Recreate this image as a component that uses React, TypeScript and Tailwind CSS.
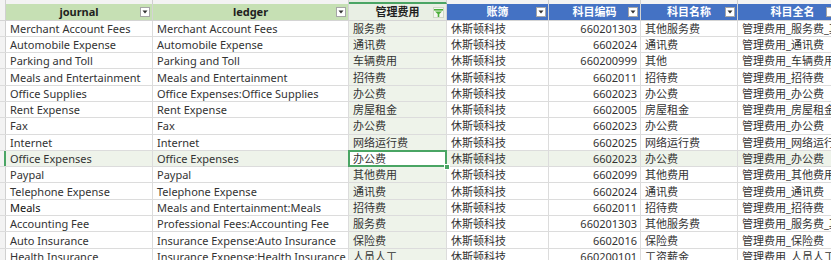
import React from "react";

const rows = [
  ["Merchant Account Fees", "Merchant Account Fees", "服务费", "休斯顿科技", "660201303", "其他服务费", "管理费用_服务费_其他服务费"],
  ["Automobile Expense", "Automobile Expense", "通讯费", "休斯顿科技", "6602024", "通讯费", "管理费用_通讯费"],
  ["Parking and Toll", "Parking and Toll", "车辆费用", "休斯顿科技", "660200999", "其他", "管理费用_车辆费用_其他"],
  ["Meals and Entertainment", "Meals and Entertainment", "招待费", "休斯顿科技", "6602011", "招待费", "管理费用_招待费"],
  ["Office Supplies", "Office Expenses:Office Supplies", "办公费", "休斯顿科技", "6602023", "办公费", "管理费用_办公费"],
  ["Rent Expense", "Rent Expense", "房屋租金", "休斯顿科技", "6602005", "房屋租金", "管理费用_房屋租金"],
  ["Fax", "Fax", "办公费", "休斯顿科技", "6602023", "办公费", "管理费用_办公费"],
  ["Internet", "Internet", "网络运行费", "休斯顿科技", "6602025", "网络运行费", "管理费用_网络运行费"],
  ["Office Expenses", "Office Expenses", "办公费", "休斯顿科技", "6602023", "办公费", "管理费用_办公费"],
  ["Paypal", "Paypal", "其他费用", "休斯顿科技", "6602099", "其他费用", "管理费用_其他费用"],
  ["Telephone Expense", "Telephone Expense", "通讯费", "休斯顿科技", "6602024", "通讯费", "管理费用_通讯费"],
  ["Meals", "Meals and Entertainment:Meals", "招待费", "休斯顿科技", "6602011", "招待费", "管理费用_招待费"],
  ["Accounting Fee", "Professional Fees:Accounting Fee", "服务费", "休斯顿科技", "660201303", "其他服务费", "管理费用_服务费_其他服务费"],
  ["Auto Insurance", "Insurance Expense:Auto Insurance", "保险费", "休斯顿科技", "6602016", "保险费", "管理费用_保险费"],
  ["Health Insurance", "Insurance Expense:Health Insurance", "人员人工", "休斯顿科技", "660200101", "工资薪金", "管理费用_人员人工_工资薪金"],
];

// column widths in px, after the 6px row-number strip
const widths = ["w-[147px]", "w-[196px]", "w-[98px]", "w-[102px]", "w-[92px]", "w-[97px]", "w-[160px]"];
const ACTIVE_ROW = 8;

function Dropdown() {
  return (
    <span className="absolute right-[2px] top-[3px] w-[10px] h-[10px] bg-white border border-[#a6a6a6] flex items-center justify-center">
      <svg width="6" height="4" viewBox="0 0 6 4">
        <path d="M0.5 0.5 L5.5 0.5 L3 3.5 Z" fill="#333" />
      </svg>
    </span>
  );
}

function Funnel() {
  return (
    <span className="absolute right-[2px] top-[3px] w-[11px] h-[11px] bg-[#f4f7f1] border border-[#cfd8c8] flex items-center justify-center">
      <svg width="9" height="8" viewBox="0 0 9 8">
        <path d="M0 0 H9 V1.6 H0 Z" fill="#4caf3a" />
        <path d="M1 2.4 H8 L5.3 5 V8 H3.7 V5 Z" fill="#4caf3a" />
      </svg>
    </span>
  );
}

export default function App() {
  const headers = [
    { t: "journal", bg: "bg-[#c6e0b4]", c: "text-[#1f1f1f]", icon: "dd" },
    { t: "ledger", bg: "bg-[#c6e0b4]", c: "text-[#1f1f1f]", icon: "dd" },
    { t: "管理费用", bg: "bg-[#e9efe4]", c: "text-[#1f1f1f]", icon: "filter" },
    { t: "账簿", bg: "bg-[#4472c4]", c: "text-white", icon: "dd" },
    { t: "科目编码", bg: "bg-[#4472c4]", c: "text-white", icon: "dd" },
    { t: "科目名称", bg: "bg-[#4472c4]", c: "text-white", icon: "dd" },
    { t: "科目全名", bg: "bg-[#4472c4]", c: "text-white", icon: "dd" },
  ];

  return (
    <div
      className="w-[831px] h-[260px] overflow-hidden bg-white text-[11px] text-[#333]"
      style={{ fontFamily: '"Noto Sans", "Noto Sans CJK SC", sans-serif' }}
    >
      {/* column letter strip (cut off) */}
      <div className="flex h-[4px] bg-[#f3f3f3]">
        <div className="w-[6px] shrink-0 border-r border-[#d0d0d0]" />
        {widths.map((w, i) => (
          <div
            key={i}
            className={`${w} shrink-0 border-r border-[#d0d0d0] ${i === 2 ? "bg-[#e3ece0] border-b-2 border-b-[#4aa564]" : ""}`}
          />
        ))}
      </div>

      {/* header row */}
      <div className="flex h-[16.5px] border-b border-[#d4d4d4]">
        <div className="w-[6px] shrink-0 bg-[#f3f3f3] border-r border-[#d0d0d0]" />
        {headers.map((h, i) => (
          <div
            key={i}
            className={`${widths[i]} shrink-0 relative border-r border-[#d4d4d4] ${h.bg} ${h.c} font-bold flex items-center justify-center leading-[15px]`}
          >
            <span className={i === 6 ? "-ml-[50px]" : ""}>{h.t}</span>
            {h.icon === "dd" ? (i === 6 ? <span className="absolute left-[88px] top-[3px] w-[10px] h-[10px] bg-white border border-[#a6a6a6]" /> : <Dropdown />) : <Funnel />}
          </div>
        ))}
      </div>

      {rows.map((r, ri) => {
        const active = ri === ACTIVE_ROW;
        return (
          <div key={ri} className={`flex h-[16.3px] border-b border-[#dcdcdc] ${active ? "bg-[#eef3ea]" : ""}`}>
            <div
              className={`w-[6px] shrink-0 bg-[#f3f3f3] border-r border-[#d0d0d0] ${active ? "border-r-2 border-r-[#4aa564] bg-[#e3ece0]" : ""}`}
            />
            {r.map((v, ci) => {
              const isActiveCell = active && ci === 2;
              return (
                <div
                  key={ci}
                  className={`${widths[ci]} shrink-0 relative border-r border-[#dcdcdc] flex items-center whitespace-nowrap leading-[15px] ${
                    ci === 4 ? "justify-end pr-[3px]" : "pl-[4px]"
                  } ${ci === 2 && !isActiveCell ? "bg-[#eef3ea]" : ""} ${isActiveCell ? "bg-white" : ""} ${
                    ri === 11 && ci === 0 ? "text-[#111]" : ""
                  }`}
                >
                  <span>{v}</span>
                  {isActiveCell && (
                    <>
                      <span className="absolute -left-[1px] -top-[1px] -right-[1px] -bottom-[1px] border-2 border-[#4aa564] pointer-events-none" />
                      <span className="absolute -right-[4px] -bottom-[4px] w-[6px] h-[6px] bg-[#4aa564] border border-white z-10" />
                    </>
                  )}
                </div>
              );
            })}
          </div>
        );
      })}
    </div>
  );
}
